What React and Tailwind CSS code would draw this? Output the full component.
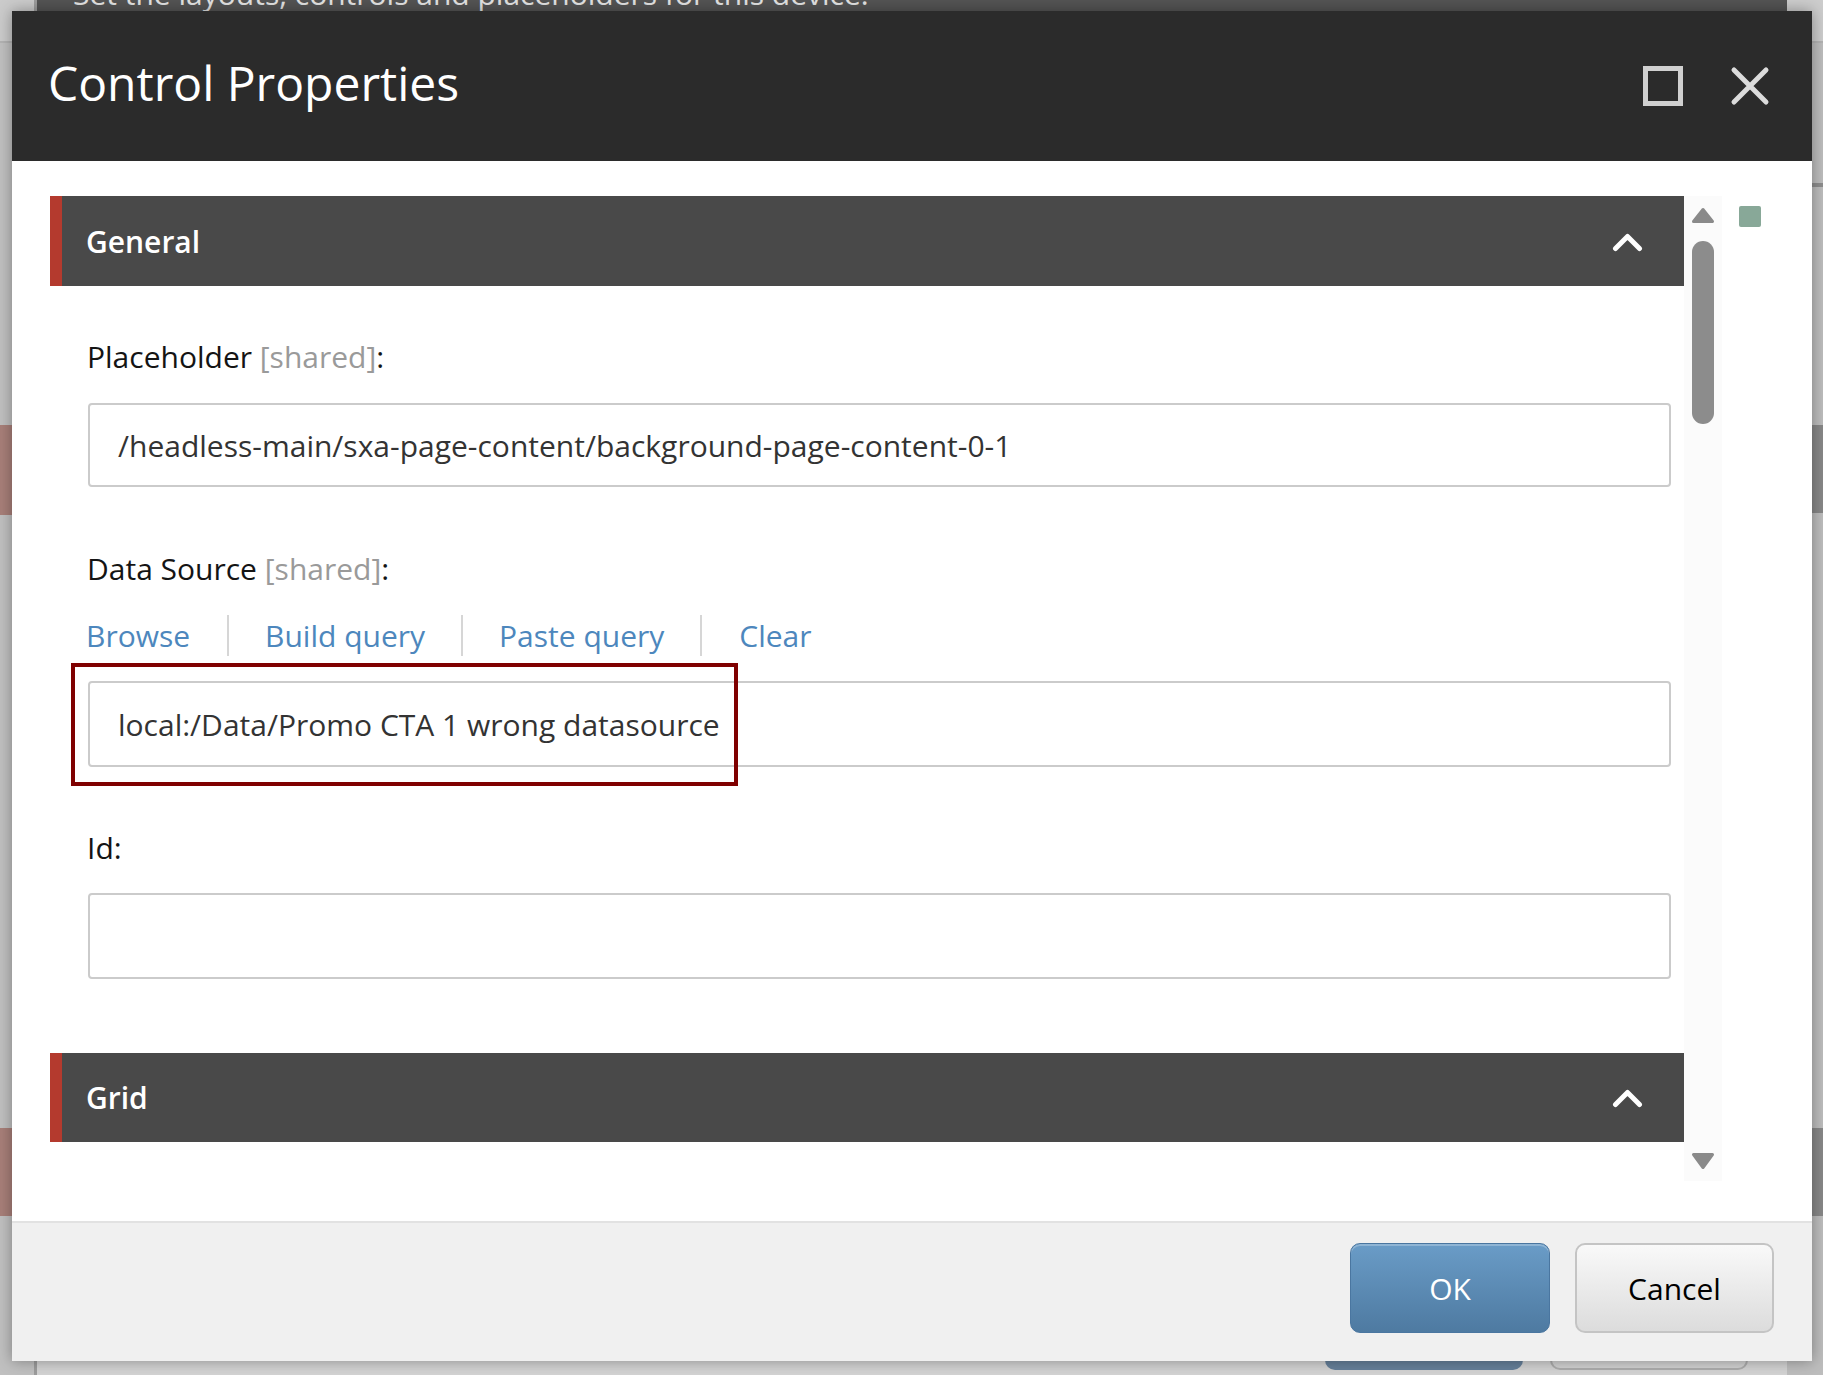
function Section({ title, h }) {
  return (
    <div
      className={`${h} border-l-[12px] border-[#b43a2e] bg-[#494949] flex items-center justify-between pl-[24px] pr-[41px]`}
    >
      <span className="text-[30px] font-semibold text-white">{title}</span>
      <svg width="31" height="21" viewBox="0 0 31 21">
        <path
          d="M3.5 17.5 L15.5 5.5 L27.5 17.5"
          fill="none"
          stroke="white"
          strokeWidth="5"
          strokeLinecap="round"
          strokeLinejoin="round"
        />
      </svg>
    </div>
  );
}

function Label({ children, className = "" }) {
  return (
    <div className={`-ml-[1px] text-[30px] leading-[40px] text-[#141414] ${className}`}>
      {children}
    </div>
  );
}

export default function App() {
  return (
    <div className="relative w-[1823px] h-[1375px] overflow-hidden bg-[#c4c4c4] font-['Open_Sans','Liberation_Sans',sans-serif]">
      {/* background page (dimmed) */}
      <div className="flex h-full">
        <div className="w-[34px] flex flex-col bg-[#c0c0c0]">
          <div className="h-[43px] border-b-2 border-[#b3b3b3] bg-[#cbcbcb]"></div>
          <div className="h-[382px]"></div>
          <div className="h-[90px] bg-[#a87f79]"></div>
          <div className="h-[613px]"></div>
          <div className="h-[88px] bg-[#a87f79]"></div>
        </div>
        <div className="w-[1753px] flex flex-col border-l-[3px] border-[#9c9c9c] bg-[#d3d3d3]">
          <div className="h-[11px] overflow-hidden bg-[#545454] pl-[36px]">
            <div className="-mt-[26px] text-[30px] leading-[40px] text-[#e4e4e4] whitespace-nowrap">
              Set the layouts, controls and placeholders for this device.
            </div>
          </div>
          <div className="flex-1"></div>
          <div className="flex justify-end gap-[27px] pr-[39px] pb-[5px]">
            <div className="w-[198px] h-[60px] rounded-[10px] bg-[#66809a]"></div>
            <div className="w-[198px] h-[60px] rounded-[10px] border-2 border-[#adadad] bg-[#d2d2d2]"></div>
          </div>
        </div>
        <div className="flex-1 flex flex-col bg-[#bdbdbd]">
          <div className="h-[43px] border-b-2 border-[#b3b3b3] bg-[#cdcdcd]"></div>
          <div className="h-[140px]"></div>
          <div className="h-[4px] bg-[#8e8e8e]"></div>
          <div className="h-[238px]"></div>
          <div className="h-[88px] bg-[#888888]"></div>
          <div className="h-[615px]"></div>
          <div className="h-[88px] bg-[#888888]"></div>
        </div>
      </div>

      {/* dialog */}
      <div className="absolute left-[12px] top-[11px] w-[1800px] h-[1350px] flex flex-col shadow-[0_0_14px_rgba(0,0,0,0.35)]">
        <div className="h-[150px] shrink-0 bg-[#2b2b2b] flex items-center justify-between pl-[36px] pr-[42px]">
          <div className="mb-[6px] text-[48px] leading-none text-white">Control Properties</div>
          <div className="flex items-center gap-[47px]">
            <div className="w-[40px] h-[40px] border-[5px] border-[#d0d0d0]"></div>
            <svg width="40" height="40" viewBox="0 0 40 40">
              <path
                d="M4 4 L36 36 M36 4 L4 36"
                stroke="#dcdcdc"
                strokeWidth="5"
                strokeLinecap="round"
              />
            </svg>
          </div>
        </div>

        <div className="flex-1 bg-white flex flex-col pt-[35px]">
          <div className="flex h-[985px]">
            <div className="ml-[38px] w-[1634px] overflow-hidden">
              <Section title="General" h="h-[90px]" />
              <div className="pl-[38px] pr-[13px] pt-[51px] pb-[74px]">
                <Label>
                  Placeholder <span className="text-[#9a9a9a]">[shared]</span>:
                </Label>
                <div className="mt-[26px] h-[84px] rounded-[4px] border-2 border-[#cbcbcb] flex items-center pl-[28px] text-[30px] text-[#333333] whitespace-nowrap">
                  /headless-main/sxa-page-content/background-page-content-0-1
                </div>

                <Label className="mt-[62px]">
                  Data Source <span className="text-[#9a9a9a]">[shared]</span>:
                </Label>
                <div className="mt-[26px] -ml-[2px] flex h-[41px] text-[30px] leading-[41px] text-[#4d87bd]">
                  <span className="pr-[37px]">Browse</span>
                  <span className="border-l-2 border-[#d6d6d6] px-[36px]">Build query</span>
                  <span className="border-l-2 border-[#d6d6d6] px-[36px]">Paste query</span>
                  <span className="border-l-2 border-[#d6d6d6] pl-[37px]">Clear</span>
                </div>
                <div className="relative mt-[25px] h-[86px] rounded-[4px] border-2 border-[#cbcbcb] flex items-center pl-[28px] text-[30px] text-[#333333] whitespace-nowrap">
                  local:/Data/Promo CTA 1 wrong datasource
                  <div className="absolute -left-[19px] -top-[20px] w-[667px] h-[123px] border-4 border-[#7f0000]"></div>
                </div>

                <Label className="mt-[61px]">Id:</Label>
                <div className="mt-[25px] h-[86px] rounded-[4px] border-2 border-[#cbcbcb]"></div>
              </div>
              <Section title="Grid" h="h-[89px]" />
            </div>

            <div className="w-[38px] bg-[#fbfbfb] flex flex-col items-center pt-[11px] pb-[11px]">
              <svg width="24" height="17" viewBox="0 0 24 17">
                <path
                  d="M12 2.5 L21.5 14.5 L2.5 14.5 Z"
                  fill="#8a8a8a"
                  stroke="#8a8a8a"
                  strokeWidth="3"
                  strokeLinejoin="round"
                />
              </svg>
              <div className="mt-[17px] w-[22px] h-[183px] rounded-full bg-[#8c8c8c]"></div>
              <div className="flex-1"></div>
              <svg width="24" height="18" viewBox="0 0 24 18">
                <path
                  d="M2.5 2.5 L21.5 2.5 L12 15.5 Z"
                  fill="#8a8a8a"
                  stroke="#8a8a8a"
                  strokeWidth="3"
                  strokeLinejoin="round"
                />
              </svg>
            </div>

            <div className="flex-1 pl-[17px] pt-[10px]">
              <div className="w-[22px] h-[21px] rounded-[2px] bg-[#88a898]"></div>
            </div>
          </div>
        </div>

        <div className="h-[140px] shrink-0 border-t-2 border-[#e2e2e2] bg-[#f0f0f0] flex justify-end items-start gap-[25px] pt-[20px] pr-[38px]">
          <button className="w-[200px] h-[90px] rounded-[10px] border border-[#4a76a0] bg-linear-to-b from-[#6a9cc7] to-[#4e7aa1] text-white text-[30px] shadow-[inset_0_2px_0_rgba(255,255,255,0.25)]">
            OK
          </button>
          <button className="w-[199px] h-[90px] rounded-[10px] border-2 border-[#c4c4c4] bg-linear-to-b from-[#f9f9f9] to-[#dcdcdc] text-black text-[30px]">
            Cancel
          </button>
        </div>
      </div>
    </div>
  );
}
